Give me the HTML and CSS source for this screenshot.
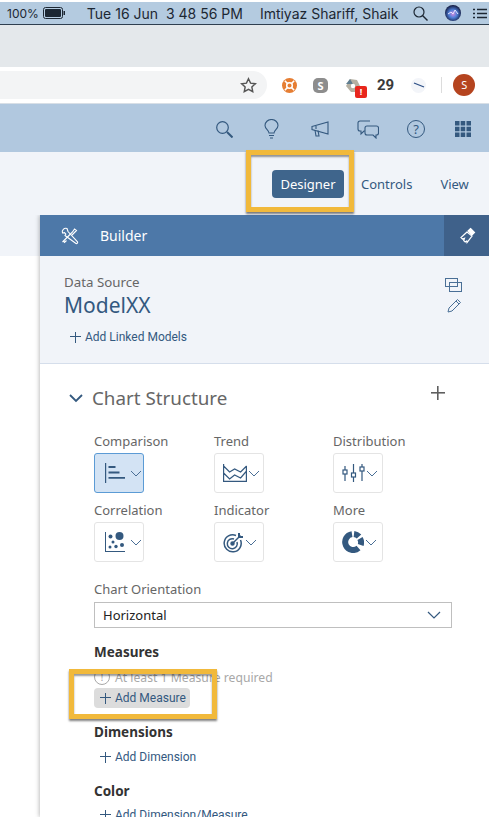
FILE: index.html
```html
<!DOCTYPE html>
<html lang="en">
<head>
    <meta charset="UTF-8">
    <meta name="viewport" content="width=device-width, initial-scale=1.0">
    <title>Builder</title>
    <link rel="stylesheet" href="styles.css">
</head>
<body>
    <!-- mac menu bar -->
    <div class="menubar">
        <span class="mb-batt">100%</span>
        <svg class="mb-batt-icon" width="23" height="12" viewBox="0 0 23 12"><rect x="0.5" y="0.5" width="19" height="11" rx="2" fill="none" stroke="#1c2733"/><rect x="2" y="2" width="16" height="8" rx="1" fill="#1c2733"/><rect x="20.5" y="4" width="1.5" height="4" fill="#1c2733"/></svg>
        <span class="mb-date">Tue 16 Jun&nbsp; 3 48 56 PM</span>
        <span class="mb-user">Imtiyaz Shariff, Shaik</span>
        <svg class="mb-search" width="15" height="15" viewBox="0 0 15 15"><circle cx="6" cy="6" r="5" fill="none" stroke="#1c2733" stroke-width="1.2"/><path d="M9.500 9.500l5 5" stroke="#1c2733" stroke-width="1.4"/></svg>
        <svg class="mb-siri" width="16" height="16" viewBox="0 0 16 16"><defs><radialGradient id="siri" cx="50%" cy="55%" r="55%"><stop offset="0" stop-color="#d58ce0"/><stop offset="0.45" stop-color="#4f7fd8"/><stop offset="1" stop-color="#10163a"/></radialGradient></defs><circle cx="8" cy="8" r="8" fill="url(#siri)"/><path d="M3 9l3-2 2 2 2-4 3 4" fill="none" stroke="#e8e4ff" stroke-width="1"/></svg>
        <svg class="mb-list" width="14" height="11" viewBox="0 0 14 11"><path d="M0 1.500h2M4 1.500h10M0 5.500h2M4 5.500h10M0 9.500h2M4 9.500h10" stroke="#1c2733" stroke-width="1.6"/></svg>
    </div>

    <div class="tabstrip"></div>

    <!-- browser toolbar -->
    <div class="toolbar">
        <div class="urlbar">
            <svg width="17" height="17" viewBox="0 0 24 24"><path d="M12 2.500l2.900 6.200 6.800.8-5 4.600 1.300 6.700-6-3.400-6 3.400 1.300-6.700-5-4.600 6.800-.8z" fill="none" stroke="#555" stroke-width="2"/></svg>
        </div>
        <div class="exts">
            <svg class="ext-a" width="15" height="15" viewBox="0 0 16 16"><circle cx="8" cy="8" r="8" fill="#e67e33"/><circle cx="8" cy="8" r="3" fill="none" stroke="#fff" stroke-width="1.6"/><path d="M3 3l3 3M13 3l-3 3M3 13l3-3M13 13l-3-3" stroke="#fff" stroke-width="1.6"/></svg>
            <span class="ext-skype">S</span>
            <span class="ext-box">
                <svg width="16" height="16" viewBox="0 0 16 16"><path d="M5 1l7 1 3 6-3 6H6L1 8z" fill="#b5b0a2"/><path d="M5 1l3 5H1z" fill="#5f7d8f"/><circle cx="8" cy="8" r="2.200" fill="#fff"/></svg>
                <span class="ext-badge">!</span>
            </span>
            <span class="ext-num">29</span>
            <span class="ext-dash"><svg width="12" height="6" viewBox="0 0 12 6"><path d="M1 1l10 4" stroke="#2d4f86" stroke-width="1.300"/></svg></span>
            <span class="ext-sep"></span>
            <span class="avatar">S</span>
        </div>
    </div>

    <!-- app shell bar -->
    <div class="shell">
        <svg width="17" height="17" viewBox="0 0 17 17" fill="none" stroke="#34597f" stroke-width="1.200"><circle cx="6.500" cy="6.500" r="5.800"/><path d="M11 11l5.500 5.500" stroke-width="2"/></svg>
        <svg class="ic-bulb" width="15" height="20" viewBox="0 0 15 20" fill="none" stroke="#34597f" stroke-width="1.100"><path d="M5 14c0-3-4-4-4-7.500a6.500 6 0 0 1 13 0C14 10 10 11 10 14z"/><path d="M5 16.500h5M6 19h3"/></svg>
        <svg class="ic-mega" width="18" height="16" viewBox="0 0 18 16" fill="none" stroke="#34597f" stroke-width="1.100"><path d="M1 5.500L17 1v12L1 8.500z"/><path d="M4 9l1 6h3L7 9.500"/><path d="M5 5v3"/></svg>
        <svg width="22" height="19" viewBox="0 0 22 19" fill="none" stroke="#34597f" stroke-width="1.100"><path d="M13 1H3a2 2 0 0 0-2 2v6a2 2 0 0 0 2 2h1v3l3-3h1"/><path d="M10 6h9.500a2 2 0 0 1 2 2v5a2 2 0 0 1-2 2H19v3l-3-3h-6a2 2 0 0 1-2-2V8a2 2 0 0 1 2-2z"/></svg>
        <span class="help">?</span>
        <svg class="ic-grid" width="16" height="16" viewBox="0 0 16 16" fill="#34597f"><path d="M0 0h4.500v4.500H0zM5.700 0h4.500v4.500H5.700zM11.500 0H16v4.500h-4.500zM0 5.700h4.500v4.500H0zM5.700 5.700h4.500v4.500H5.700zM11.500 5.700H16v4.500h-4.500zM0 11.500h4.500V16H0zM5.700 11.500h4.500V16H5.700zM11.500 11.500H16V16h-4.500z"/></svg>
    </div>

    <!-- tabs row -->
    <div class="tabs">
        <span class="tab tab-active">Designer</span>
        <span class="tab tab-controls">Controls</span>
        <span class="tab tab-view">View</span>
        <span class="callout callout-designer"></span>
    </div>

    <div class="workspace">
        <div class="gutter"></div>
        <div class="panel">
            <div class="panel-head">
                <svg width="18" height="18" viewBox="0 0 18 18" fill="none" stroke="#fff" stroke-width="1.100"><path d="M6 1.500a3.500 3.500 0 0 0-4.500 4.500l2-.3 1.300 1.300L4 8.500 9.500 12.500 15 16.500a1.200 1.200 0 0 0 1.500-1.700L7 4.500z"/><path d="M1.500 15l8-8 2-2 2-3 2 1.500-2.500 2.500-2 2M4.500 12l-2 2 1 1.500 2-2"/></svg>
                <span class="panel-title">Builder</span>
                <span class="panel-pin">
                    <svg width="18" height="18" viewBox="0 0 18 18" fill="none" stroke="#fff" stroke-width="1.200"><path d="M12.500 1.500l4 4-2.500 2.500-4-4z" fill="#fff"/><path d="M9 5L3 10.500l1.500 1.500 2-.7-.8 2.200 1.500 1.500 1.500-1 .3 1.500L14 9z"/></svg>
                </span>
            </div>

            <div class="source">
                <div>
                    <div class="source-label">Data Source</div>
                    <div class="source-name">ModelXX</div>
                    <div class="add-link add-linked"><span class="plus"></span>Add Linked Models</div>
                </div>
                <div class="source-icons">
                    <svg width="17" height="14" viewBox="0 0 17 14" fill="none" stroke="#4a6f96"><rect x="0.500" y="0.500" width="12" height="8"/><rect x="4.500" y="4.500" width="12" height="9"/></svg>
                    <svg width="15" height="15" viewBox="0 0 15 15" fill="none" stroke="#4a6f96"><path d="M1 14l1-4 8.500-8.500 3 3L5 13zM9 3l3 3"/></svg>
                </div>
            </div>

            <div class="structure">
                <div class="structure-head">
                    <svg width="14" height="9" viewBox="0 0 14 9" fill="none" stroke="#34597f" stroke-width="1.800"><path d="M1 1l6 6 6-6"/></svg>
                    <h2>Chart Structure</h2>
                    <span class="big-plus"></span>
                </div>

                <div class="chart-types">
                    <div>
                        <div class="ctype-label">Comparison</div>
                        <div class="cbtn cbtn-on">
                            <svg width="20" height="20" viewBox="0 0 20 20" fill="#34597f"><path d="M0 0h1.200v20H0zM3.500 3h7v2h-7zM3.500 8.500h11v2h-11zM3.500 14H20v1.800H3.500z"/></svg>
                            <svg class="caret" width="12" height="7" viewBox="0 0 12 7" fill="none" stroke="#4a6f96"><path d="M1 1l5 5 5-5"/></svg>
                        </div>
                    </div>
                    <div>
                        <div class="ctype-label">Trend</div>
                        <div class="cbtn cbtn-tight">
                            <svg width="24" height="18" viewBox="0 0 24 18" fill="none" stroke="#34597f" stroke-width="1.200"><path d="M.6 0v17.400h22.800V2M.6 2l6 6 5-3 6 3 6-6M.6 9l6 6 5-4 6 3 6-7"/></svg>
                            <svg class="caret" width="12" height="7" viewBox="0 0 12 7" fill="none" stroke="#4a6f96"><path d="M1 1l5 5 5-5"/></svg>
                        </div>
                    </div>
                    <div>
                        <div class="ctype-label">Distribution</div>
                        <div class="cbtn cbtn-tight">
                            <svg width="23" height="20" viewBox="0 0 23 20" fill="none" stroke="#34597f" stroke-width="1.200"><path d="M3 3v4M3 11v7M11.500 1v9M11.500 14v5M20 1v3M20 8v10"/><rect x="1" y="7" width="4" height="4"/><rect x="9.500" y="10" width="4" height="4"/><rect x="18" y="4" width="4" height="4"/></svg>
                            <svg class="caret" width="12" height="7" viewBox="0 0 12 7" fill="none" stroke="#4a6f96"><path d="M1 1l5 5 5-5"/></svg>
                        </div>
                    </div>
                    <div>
                        <div class="ctype-label">Correlation</div>
                        <div class="cbtn">
                            <svg width="20" height="20" viewBox="0 0 20 20" fill="#34597f"><path d="M0 0h1v20H0zM0 19h20v1H0z"/><circle cx="5.500" cy="4.500" r="2"/><circle cx="14.500" cy="4" r="4"/><circle cx="8" cy="10" r="1.500"/><circle cx="17" cy="13" r="2"/><circle cx="5" cy="15" r="1.500"/><circle cx="11" cy="14.500" r="1.700"/></svg>
                            <svg class="caret" width="12" height="7" viewBox="0 0 12 7" fill="none" stroke="#4a6f96"><path d="M1 1l5 5 5-5"/></svg>
                        </div>
                    </div>
                    <div>
                        <div class="ctype-label">Indicator</div>
                        <div class="cbtn cbtn-tight">
                            <svg width="21" height="21" viewBox="0 0 21 21" fill="none" stroke="#34597f" stroke-width="1.500"><path d="M13 3.500a8.500 8.500 0 1 0 4.500 4.500"/><path d="M11 7a5 5 0 1 0 3 3"/><circle cx="9.500" cy="11.500" r="1.500" fill="#34597f"/><path d="M9.500 11.500l8-8"/><path d="M16 1v4h4" stroke-width="2"/></svg>
                            <svg class="caret" width="12" height="7" viewBox="0 0 12 7" fill="none" stroke="#4a6f96"><path d="M1 1l5 5 5-5"/></svg>
                        </div>
                    </div>
                    <div>
                        <div class="ctype-label">More</div>
                        <div class="cbtn cbtn-tight">
                            <svg width="22" height="22" viewBox="0 0 22 22" fill="none" stroke="#34597f" stroke-width="6"><path d="M16.500 17A8 8 0 1 1 10 3.100"/><path d="M12 3a8 8 0 0 1 5 2.600M18 7.500a8 8 0 0 1 .7 6.500"/></svg>
                            <svg class="caret" width="12" height="7" viewBox="0 0 12 7" fill="none" stroke="#4a6f96"><path d="M1 1l5 5 5-5"/></svg>
                        </div>
                    </div>
                </div>

                <div class="field-label">Chart Orientation</div>
                <div class="select">
                    <span>Horizontal</span>
                    <svg width="14" height="8" viewBox="0 0 14 8" fill="none" stroke="#34597f" stroke-width="1.200"><path d="M1 1l6 6 6-6"/></svg>
                </div>

                <h3 class="group-title">Measures</h3>
                <div class="required"><span class="req-icon">!</span>At least 1 Measure required</div>
                <div class="add-link add-measure"><span class="plus"></span>Add Measure</div>
                <span class="callout callout-measure"></span>

                <h3 class="group-title">Dimensions</h3>
                <div class="add-link add-dim"><span class="plus"></span>Add Dimension</div>

                <h3 class="group-title">Color</h3>
                <div class="add-link add-color"><span class="plus"></span>Add Dimension/Measure</div>
            </div>
        </div>
    </div>
</body>
</html>
```

FILE: styles.css
```css
* {
    box-sizing: border-box;
    margin: 0;
}

html, body {
    height: 817px;
    overflow: hidden;
}

body {
    width: 489px;
    background-color: #fff;
    font-family: "Noto Sans", "Liberation Sans", sans-serif;
    color: #666;
}

/* menu bar */
.menubar {
    height: 23px;
    margin-top: 2px;
    padding-left: 7px;
    display: flex;
    align-items: center;
    background-color: #b4cbe0;
    border-bottom: 1px solid #2f3f4f;
    color: #1c2733;
    font-family: Inter, "Liberation Sans", sans-serif;
    font-size: 14px;
    white-space: nowrap;
    overflow: hidden;
}

.mb-batt { font-size: 12px; }
.mb-batt-icon { margin-left: 4px; flex: none; }
.mb-date { margin-left: 21px; }
.mb-user { margin-left: 17px; }
.mb-search { margin-left: 15px; flex: none; }
.mb-siri { margin-left: 17px; flex: none; }
.mb-list { margin-left: 12px; flex: none; }

.tabstrip {
    height: 42px;
    background-color: #e4e8eb;
}

/* browser toolbar */
.toolbar {
    height: 36px;
    display: flex;
    align-items: center;
    background-color: #fff;
}

.urlbar {
    width: 267px;
    height: 28px;
    padding-right: 10px;
    display: flex;
    align-items: center;
    justify-content: flex-end;
    background-color: #f3f4f5;
    border-radius: 0 14px 14px 0;
}

.exts {
    flex: 1;
    display: flex;
    align-items: center;
}

.ext-a { margin-left: 15px; }

.ext-skype {
    width: 15px;
    height: 15px;
    margin-left: 16px;
    border-radius: 5px;
    background-color: #8d8d8d;
    color: #fff;
    font-size: 11px;
    font-weight: bold;
    line-height: 15px;
    text-align: center;
}

.ext-box {
    position: relative;
    width: 16px;
    height: 16px;
    margin-left: 17px;
}

.ext-badge {
    position: absolute;
    left: 10px;
    top: 9px;
    width: 12px;
    height: 12px;
    border-radius: 2px;
    background-color: #e8261c;
    color: #fff;
    font-size: 9px;
    font-weight: bold;
    line-height: 12px;
    text-align: center;
}

.ext-num {
    margin-left: 16px;
    color: #3a3a3a;
    font-family: Roboto, sans-serif;
    font-size: 15px;
    font-weight: bold;
}

.ext-dash {
    width: 15px;
    height: 15px;
    margin-left: 17px;
    display: flex;
    align-items: center;
    justify-content: center;
    border-radius: 50%;
    background-color: #f3f5f9;
}

.ext-sep {
    width: 1px;
    height: 16px;
    margin-left: 15px;
    background-color: #dcdcdc;
}

.avatar {
    width: 22px;
    height: 22px;
    margin-left: 11px;
    border-radius: 50%;
    background-color: #b5441f;
    color: #fff;
    font-size: 11px;
    line-height: 22px;
    text-align: center;
}

/* app shell bar */
.shell {
    height: 49px;
    padding: 2px 0 0 216px;
    display: flex;
    align-items: center;
    gap: 28px;
    background-color: #b1c8df;
    border-top: 1px solid #d8dfe6;
}

.ic-bulb { margin-left: 3px; }
.ic-mega { margin-left: 4px; }
.ic-grid { margin-left: 2px; }

.help {
    width: 18px;
    height: 18px;
    border: 1.2px solid #34597f;
    border-radius: 50%;
    color: #34597f;
    font-size: 13px;
    line-height: 16px;
    text-align: center;
}

/* tabs row */
.tabs {
    position: relative;
    height: 63px;
    padding-top: 18px;
    padding-left: 272px;
    display: flex;
    align-items: flex-start;
    background-color: #f1f4f9;
}

.tab {
    height: 28px;
    color: #34597f;
    font-size: 13px;
    line-height: 28px;
}

.tab-active {
    width: 72px;
    border-radius: 4px;
    background-color: #3f658c;
    color: #fff;
    text-align: center;
}

.tab-controls { margin-left: 17px; }
.tab-view { margin-left: 28px; }

.callout {
    position: absolute;
    border: 5px solid #f1b93b;
    box-shadow: 0 2px 2px rgba(0, 0, 0, .5), inset 0 2px 2px rgba(0, 0, 0, .4);
}

.callout-designer {
    left: 246px;
    top: -2px;
    width: 108px;
    height: 62px;
}

/* builder panel */
.workspace {
    display: flex;
    height: 602px;
    overflow: hidden;
}

.gutter {
    width: 40px;
    height: 41px;
    background-color: #f1f4f9;
}

.panel {
    flex: 1;
    height: 602px;
    background-color: #fff;
    box-shadow: -1px 0 4px rgba(0, 0, 0, .25);
}

.panel-head {
    height: 41px;
    padding-left: 21px;
    display: flex;
    align-items: center;
    background-color: #4d78a8;
    color: #fff;
}

.panel-title {
    margin-left: 21px;
    font-size: 14px;
}

.panel-pin {
    width: 45px;
    height: 41px;
    margin-left: auto;
    display: flex;
    align-items: center;
    justify-content: center;
    background-color: #3f618a;
}

.source {
    height: 108px;
    padding: 18px 27px 0 24px;
    display: flex;
    justify-content: space-between;
    background-color: #f1f4f9;
    border-bottom: 1px solid #d5deeb;
}

.source-label {
    font-size: 13.3px;
    line-height: 16px;
}

.source-name {
    margin-top: 1px;
    color: #34597f;
    font-size: 21px;
    line-height: 28px;
}

.source-icons {
    padding-top: 4px;
    display: flex;
    flex-direction: column;
    align-items: flex-end;
    gap: 6px;
}

.add-link {
    height: 20px;
    display: flex;
    align-items: center;
    gap: 4px;
    color: #34597f;
    font-family: Roboto, "Noto Sans", sans-serif;
    font-size: 12px;
    white-space: nowrap;
}

.plus {
    width: 11px;
    height: 11px;
    flex: none;
    background:
        linear-gradient(#34597f, #34597f) center / 100% 1.4px no-repeat,
        linear-gradient(#34597f, #34597f) center / 1.4px 100% no-repeat;
}

.add-linked { margin: 8px 0 0 6px; }

.structure {
    position: relative;
    padding: 20px 0 0 54px;
}

.structure-head {
    position: relative;
    height: 28px;
    margin-left: -25px;
    display: flex;
    align-items: center;
    gap: 9px;
}

.structure-head h2 {
    font-size: 18.8px;
    font-weight: normal;
}

.big-plus {
    position: absolute;
    right: 44px;
    top: 2px;
    width: 14px;
    height: 14px;
    background:
        linear-gradient(#5f5f5f, #5f5f5f) center / 100% 1.6px no-repeat,
        linear-gradient(#5f5f5f, #5f5f5f) center / 1.6px 100% no-repeat;
}

.chart-types {
    margin-top: 21px;
    display: grid;
    grid-template-columns: 120px 119px 1fr;
    row-gap: 9px;
}

.ctype-label {
    font-size: 13px;
    line-height: 16px;
}

.cbtn {
    width: 50px;
    height: 40px;
    margin-top: 4px;
    padding-left: 10px;
    display: flex;
    align-items: center;
    gap: 5px;
    background-color: #fff;
    border: 1px solid #e4e4e4;
    border-radius: 3px;
}

.cbtn-tight {
    padding-left: 8px;
    gap: 1px;
}

.cbtn-on {
    background-color: #d3e3f4;
    border-color: #5b9bd5;
}

.caret { flex: none; }

.field-label {
    margin-top: 19px;
    font-size: 13px;
    line-height: 16px;
}

.select {
    width: 358px;
    height: 26px;
    margin-top: 5px;
    padding: 0 10px 0 8px;
    display: flex;
    align-items: center;
    justify-content: space-between;
    border: 1px solid #bfbfbf;
    color: #222;
    font-size: 13px;
}

.group-title {
    margin-top: 15px;
    color: #333;
    font-size: 13.5px;
    line-height: 18px;
}

.required {
    height: 16px;
    margin-top: 8px;
    display: flex;
    align-items: center;
    gap: 5px;
    color: #a8a8a8;
    font-size: 12.2px;
}

.req-icon {
    width: 16px;
    height: 16px;
    border: 1px solid #a8a8a8;
    border-radius: 50%;
    font-size: 11px;
    line-height: 14px;
    text-align: center;
}

.add-measure {
    width: 96px;
    margin-top: 3px;
    padding-left: 6px;
    background-color: #dcdcdc;
    border-radius: 4px;
}

.add-dim { margin: 6px 0 0 6px; }
.add-color { margin: 5px 0 0 6px; }

.callout-measure {
    left: 29px;
    top: 305px;
    width: 148px;
    height: 50px;
}
```
